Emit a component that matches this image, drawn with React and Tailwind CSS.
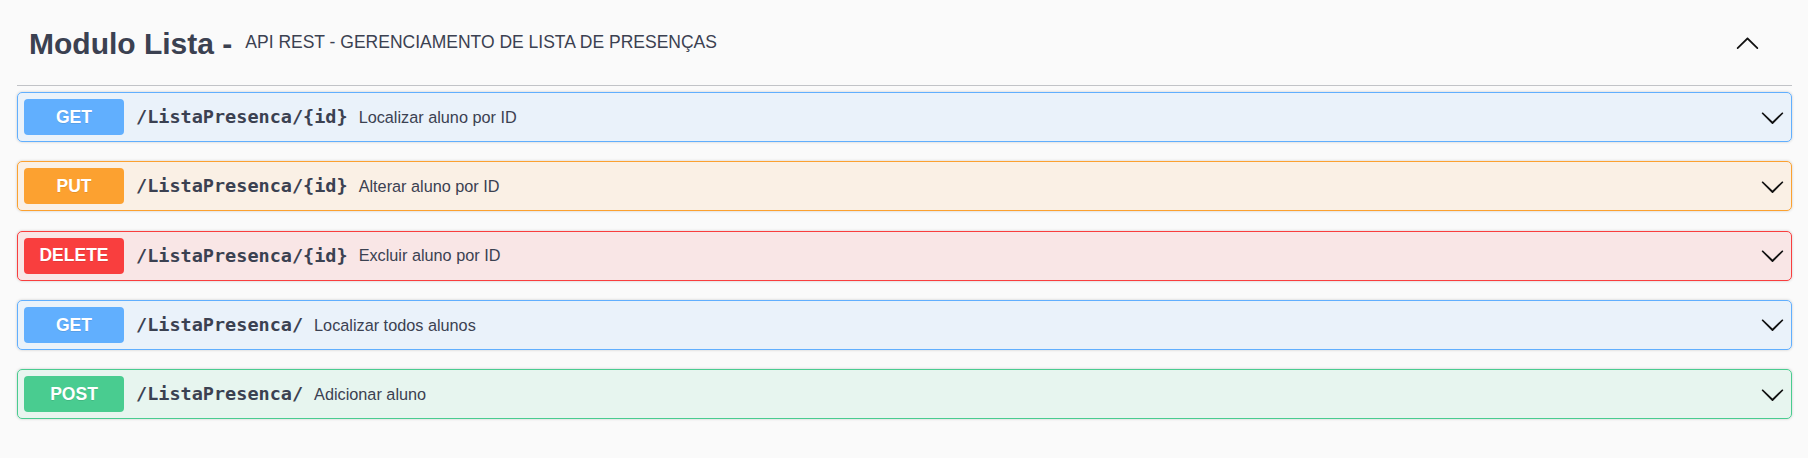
import { useState } from "react";

const ops = [
  { method: "GET", path: "/ListaPresenca/{id}", desc: "Localizar aluno por ID", badge: "bg-[#61affe]", box: "border-[#61affe] bg-[#61affe]/10" },
  { method: "PUT", path: "/ListaPresenca/{id}", desc: "Alterar aluno por ID", badge: "bg-[#fca130]", box: "border-[#fca130] bg-[#fca130]/10" },
  { method: "DELETE", path: "/ListaPresenca/{id}", desc: "Excluir aluno por ID", badge: "bg-[#f93e3e]", box: "border-[#f93e3e] bg-[#f93e3e]/10" },
  { method: "GET", path: "/ListaPresenca/", desc: "Localizar todos alunos", badge: "bg-[#61affe]", box: "border-[#61affe] bg-[#61affe]/10" },
  { method: "POST", path: "/ListaPresenca/", desc: "Adicionar aluno", badge: "bg-[#49cc90]", box: "border-[#49cc90] bg-[#49cc90]/10" },
];

const ArrowDown = () => (
  <svg width="25" height="25" viewBox="0 0 20 20" className="shrink-0 fill-[#111]">
    <path d="M17.418 6.109c.272-.268.709-.268.979 0s.271.701 0 .969l-7.908 7.83c-.27.268-.707.268-.979 0l-7.908-7.83c-.27-.268-.27-.701 0-.969.271-.268.709-.268.979 0L10 13.25l7.418-7.141z" />
  </svg>
);

const ArrowUp = () => (
  <svg width="25" height="25" viewBox="0 0 20 20" className="shrink-0 fill-[#111]">
    <path d="M17.418 14.908c.272.268.709.268.979 0s.271-.701 0-.969l-7.908-7.83c-.27-.268-.707-.268-.979 0l-7.908 7.83c-.27.268-.27.701 0 .969.271.268.709.268.979 0L10 7.767l7.418 7.141z" />
  </svg>
);

const OpBlock = ({ op }) => {
  return (
    <div className={"flex items-center h-[50px] mb-[19.25px] border rounded-[5px] p-[6px] shadow-[0_0_3px_rgba(0,0,0,0.19)] " + op.box}>
      <span className={"w-[100px] h-[36px] shrink-0 rounded-[4px] flex items-center justify-center text-white font-bold text-[17.5px] [text-shadow:0_1px_0_rgba(0,0,0,0.1)] " + op.badge}>
        {op.method}
      </span>
      <span className="ml-[12px] mr-[11px] font-['DejaVu_Sans_Mono',monospace] font-bold text-[18.5px] text-[#3b4151]">
        {op.path}
      </span>
      <span className="flex-1 text-[16.25px] text-[#3b4151]">{op.desc}</span>
      <ArrowDown />
    </div>
  );
};

export default function App() {
  const [open] = useState(true);

  return (
    <div className="min-h-screen bg-[#fafafa] pl-[17px] pr-[16px] font-['Liberation_Sans',Arial,sans-serif]">
      {/* tag header */}
      <div className="flex items-center h-[86px] border-b border-[#c1c3c7] pl-[12px]">
        <h3 className="pt-[2px] text-[30px] font-bold text-[#3b4151]">Modulo Lista -</h3>
        <small className="flex-1 ml-[13px] text-[17.5px] text-[#3b4151]">API REST - GERENCIAMENTO DE LISTA DE PRESENÇAS</small>
        <span className="mr-[32px]">{open ? <ArrowUp /> : <ArrowDown />}</span>
      </div>

      <div className="mt-[6px]">
        {ops.map((op, i) => (
          <OpBlock op={op} key={i} />
        ))}
      </div>
    </div>
  );
}
